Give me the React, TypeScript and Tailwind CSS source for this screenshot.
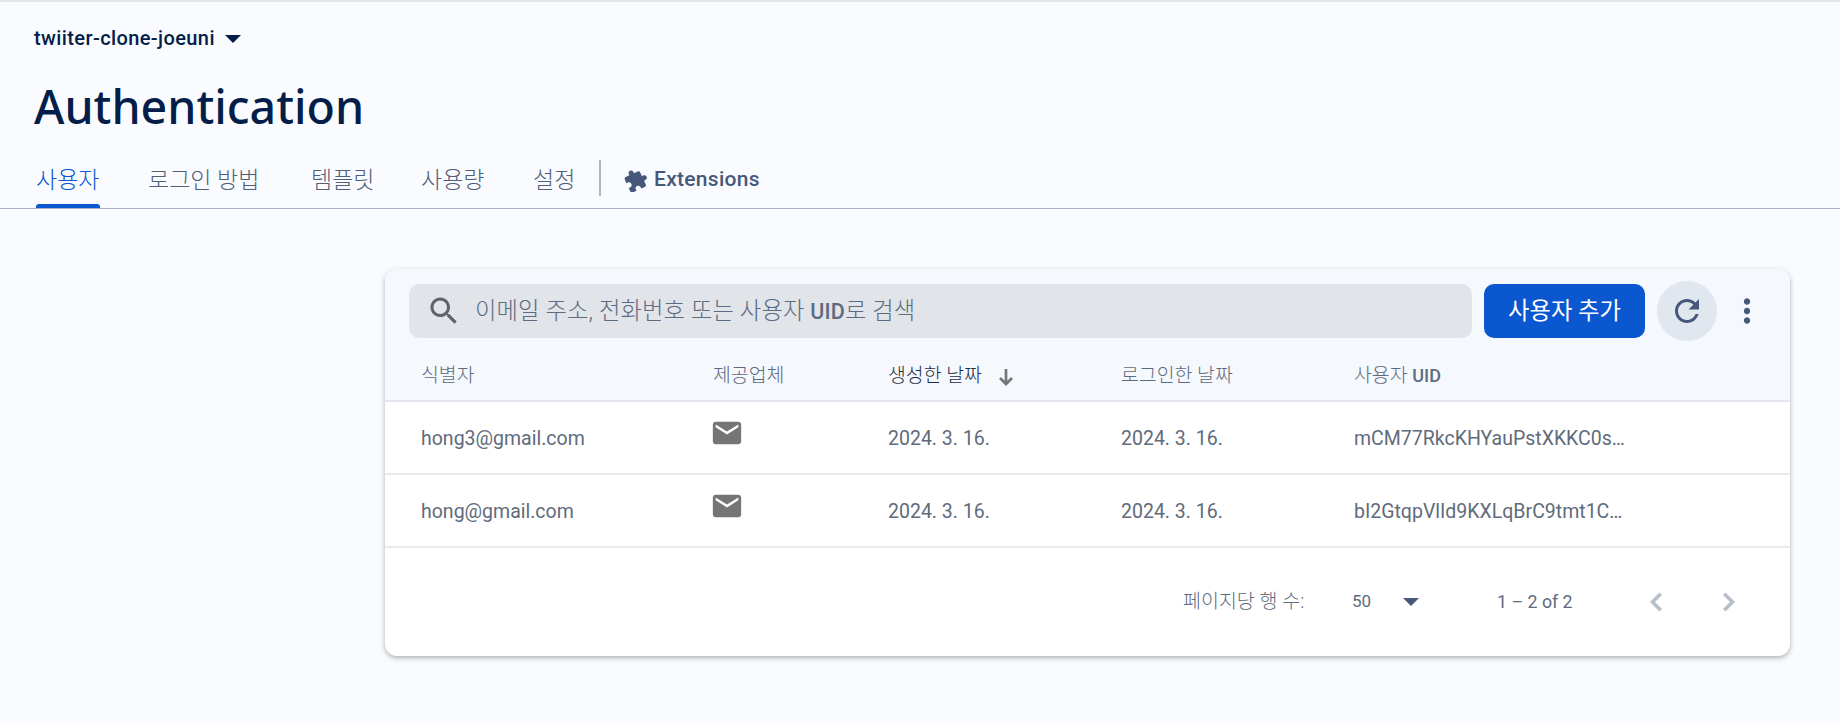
import React from "react";

const KR = "font-['Roboto','Noto_Sans_CJK_KR',sans-serif]";

const tabs = [
  { label: "사용자", width: "w-[112px]", active: true },
  { label: "로그인 방법", width: "w-[163px]", active: false },
  { label: "템플릿", width: "w-[110px]", active: false },
  { label: "사용량", width: "w-[112px]", active: false },
  { label: "설정", width: "w-[67px]", active: false },
];

const rows = [
  { email: "hong3@gmail.com", created: "2024. 3. 16.", signedIn: "2024. 3. 16.", uid: "mCM77RkcKHYauPstXKKC0s…" },
  { email: "hong@gmail.com", created: "2024. 3. 16.", signedIn: "2024. 3. 16.", uid: "bI2GtqpVlId9KXLqBrC9tmt1C…" },
];

function Tabs() {
  return (
    <div className="flex items-stretch h-[50px] ml-[36px]">
      {tabs.map((t) => (
        <div key={t.label} className={`${t.width} relative pt-[7px] text-[23px] leading-[32px] font-light ${t.active ? "text-[#0b57d0]" : "text-[#4f5f78]"}`}>
          {t.label}
          {t.active && <div className="absolute left-0 bottom-0 w-[64px] h-[4px] rounded-t-[3px] bg-[#0b57d0]" />}
        </div>
      ))}
      <div className="w-[2px] h-[36px] mt-[2px] -ml-[1px] bg-[#aeb6c4]" />
      <div className="flex items-center gap-[6px] ml-[23px] pb-[6px] text-[#45587a] text-[21px] tracking-[0.3px] font-medium">
        <svg width="24" height="24" viewBox="0 0 24 24" fill="currentColor">
          <path transform="rotate(-25 12 12)" d="M20.5 11H19V7c0-1.1-.9-2-2-2h-4V3.5C13 2.12 11.88 1 10.5 1S8 2.12 8 3.5V5H4c-1.1 0-1.99.9-1.99 2v3.8H3.5c1.49 0 2.7 1.21 2.7 2.7s-1.21 2.7-2.7 2.7H2V20c0 1.1.9 2 2 2h3.8v-1.5c0-1.49 1.21-2.7 2.7-2.7 1.49 0 2.7 1.21 2.7 2.7V22H17c1.1 0 2-.9 2-2v-4h1.5c1.38 0 2.5-1.12 2.5-2.5S21.88 11 20.5 11z" />
        </svg>
        Extensions
      </div>
    </div>
  );
}

function Toolbar() {
  return (
    <div className="flex items-center h-[78px] pt-[6px] pl-[24px] bg-[#f5f8fd]">
      <div className="flex items-center w-[1063px] h-[54px] rounded-[10px] bg-[#e1e4e9] pl-[17px] text-[#5d6b80] text-[23.3px] tracking-[0.12px] font-light">
        <svg width="36" height="36" viewBox="0 0 24 24" fill="#5f6368">
          <path d="M15.5 14h-.79l-.28-.27C15.41 12.59 16 11.11 16 9.5 16 5.91 13.09 3 9.5 3S3 5.91 3 9.5 5.91 16 9.5 16c1.61 0 3.09-.59 4.23-1.57l.27.28v.79l5 4.99L20.49 19l-4.99-5zm-6 0C7.01 14 5 11.99 5 9.5S7.01 5 9.5 5 14 7.01 14 9.5 11.99 14 9.5 14z" />
        </svg>
        <span className="ml-[13px]">
          이메일 주소, 전화번호 또는 사용자 <span className="font-medium text-[21.5px]">UID</span>로 검색
        </span>
      </div>
      <div className="flex items-center justify-center w-[161px] h-[54px] ml-[12px] rounded-[10px] bg-[#0b57d0] text-white text-[23.3px]">
        사용자 추가
      </div>
      <div className="flex items-center justify-center w-[60px] h-[60px] ml-[12px] rounded-full bg-[#e1e7ef] text-[#45587a]">
        <svg width="36" height="36" viewBox="0 0 24 24" fill="currentColor">
          <path d="M17.65 6.35C16.2 4.9 14.21 4 12 4c-4.42 0-7.99 3.58-7.99 8s3.57 8 7.99 8c3.73 0 6.84-2.55 7.73-6h-2.08c-.82 2.33-3.04 4-5.65 4-3.31 0-6-2.69-6-6s2.69-6 6-6c1.66 0 3.14.69 4.22 1.78L13 11h7V4l-2.35 2.35z" />
        </svg>
      </div>
      <svg className="ml-[11px] text-[#45587a]" width="38" height="38" viewBox="0 0 24 24" fill="currentColor">
        <path d="M12 8c1.1 0 2-.9 2-2s-.9-2-2-2-2 .9-2 2 .9 2 2 2zm0 2c-1.1 0-2 .9-2 2s.9 2 2 2 2-.9 2-2-.9-2-2-2zm0 6c-1.1 0-2 .9-2 2s.9 2 2 2 2-.9 2-2-.9-2-2-2z" />
      </svg>
    </div>
  );
}

const gridCols = "grid grid-cols-[292px_175px_233px_233px_271px] pl-[36px] items-center";

function Table() {
  return (
    <div>
      <div className={`${gridCols} h-[55px] pt-[5px] bg-[#f5f8fd] border-b-2 border-[#e3e6ed] text-[#5d6b80] text-[19.4px] font-light`}>
        <div>식별자</div>
        <div>제공업체</div>
        <div className="flex items-center text-[#1f2d47]">
          생성한 날짜
          <svg className="ml-[12px] mt-[3px]" width="24" height="24" viewBox="0 0 24 24" fill="none" stroke="#757575" strokeWidth="2.7">
            <path d="M12 4v15M6 13l6 6 6-6" />
          </svg>
        </div>
        <div>로그인한 날짜</div>
        <div>
          사용자 <span className="font-medium text-[18px]">UID</span>
        </div>
      </div>
      {rows.map((r) => (
        <div key={r.uid} className={`${gridCols} h-[73px] pt-[2px] border-b-2 border-[#e8eaee] text-[#606b7b] text-[19.5px]`}>
          <div>{r.email}</div>
          <div className="-mt-[12px] -ml-[3px]">
            <svg width="34" height="34" viewBox="0 0 24 24" fill="#757575">
              <path d="M20 4H4c-1.1 0-1.99.9-1.99 2L2 18c0 1.1.9 2 2 2h16c1.1 0 2-.9 2-2V6c0-1.1-.9-2-2-2zm0 4l-8 5-8-5V6l8 5 8-5v2z" />
            </svg>
          </div>
          <div>{r.created}</div>
          <div>{r.signedIn}</div>
          <div className="truncate">{r.uid}</div>
        </div>
      ))}
    </div>
  );
}

function Pager() {
  return (
    <div className="flex items-center h-[108px] pl-[798px] text-[#5d6b80] text-[17.8px]">
      <span className="w-[169px] font-light text-[19.5px]">페이지당 행 수:</span>
      <span className="w-[49px] text-[17px]">50</span>
      <svg className="w-[18px] h-[8px] ml-[1px]" viewBox="0 0 18 8" fill="#45587a">
        <path d="M1 0h16l-8 8z" />
      </svg>
      <span className="ml-[77px] w-[148px]">1 – 2 of 2</span>
      <svg width="36" height="36" viewBox="0 0 24 24" fill="none" stroke="#b8bfcc" strokeWidth="2.4" className="-ml-[6px]">
        <path d="M14.5 6.5L9 12l5.5 5.5" />
      </svg>
      <svg width="36" height="36" viewBox="0 0 24 24" fill="none" stroke="#b8bfcc" strokeWidth="2.4" className="ml-[35px]">
        <path d="M9.5 6.5L15 12l-5.5 5.5" />
      </svg>
    </div>
  );
}

export default function App() {
  return (
    <div className={`min-h-[724px] bg-[#fafbff] border-t-[2px] border-[#e3e5e6] ${KR}`}>
      <div className="flex items-center h-[36px] mt-[18px] ml-[34px] text-[#041e49] text-[20px] font-medium tracking-[0.4px]">
        twiiter-clone-joeuni
        <svg className="ml-[10px] mt-[1px]" width="16" height="8" viewBox="0 0 16 8" fill="currentColor">
          <path d="M0 0h16l-8 8z" />
        </svg>
      </div>
      <h1 className="mt-[16px] ml-[34px] h-[68px] text-[46.5px] leading-[68px] font-medium text-[#041e49] font-['Noto_Sans',sans-serif]">
        Authentication
      </h1>
      <div className="mt-[18px] border-b border-[#a9b2c2]">
        <Tabs />
      </div>
      <div className="ml-[385px] mt-[60px] w-[1405px] rounded-[12px] bg-white overflow-hidden shadow-[0_2px_5px_rgba(60,64,67,0.4)]">
        <Toolbar />
        <Table />
        <Pager />
      </div>
    </div>
  );
}
